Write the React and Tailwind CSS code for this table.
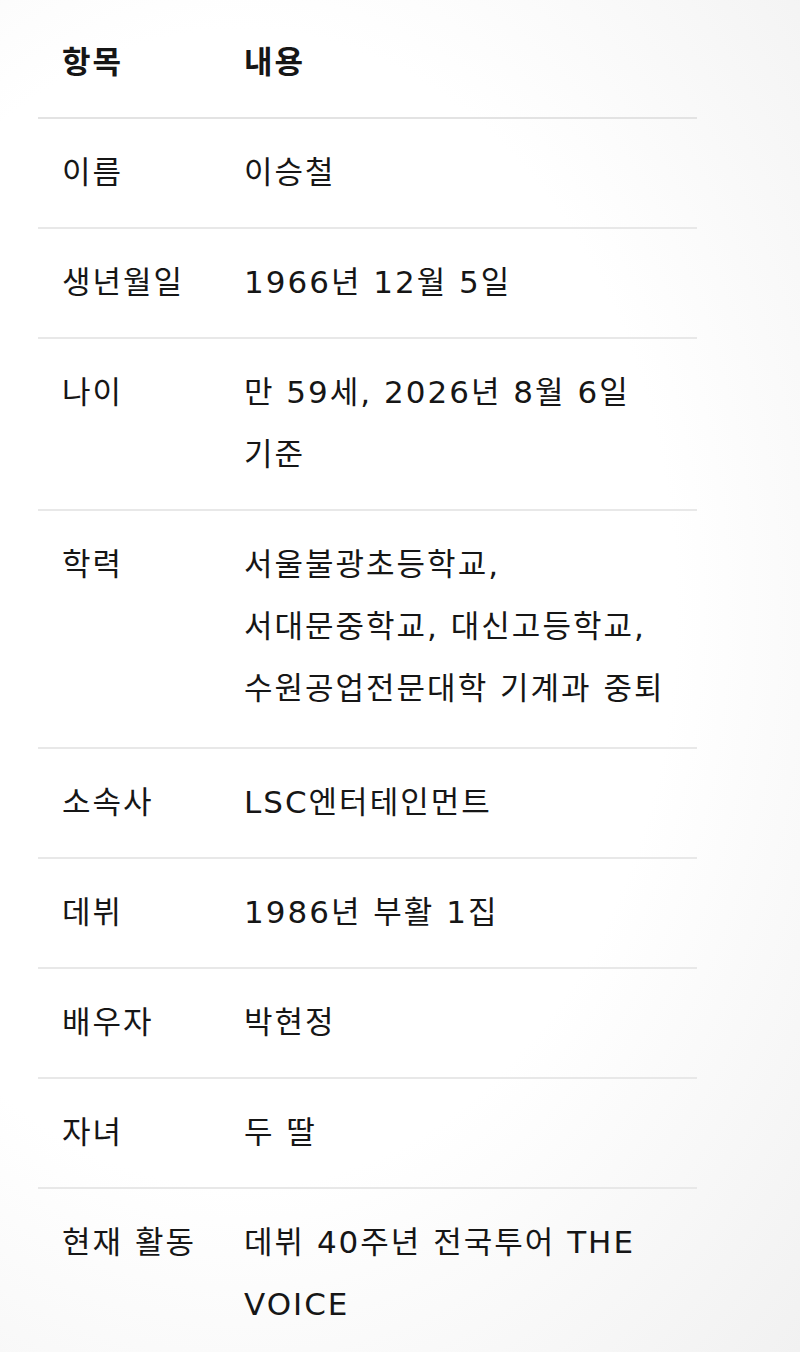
import React from "react";

const rows = [
  ["이름", ["이승철"]],
  ["생년월일", ["1966년 12월 5일"]],
  ["나이", ["만 59세, 2026년 8월 6일", "기준"]],
  ["학력", ["서울불광초등학교,", "서대문중학교, 대신고등학교,", "수원공업전문대학 기계과 중퇴"]],
  ["소속사", ["LSC엔터테인먼트"]],
  ["데뷔", ["1986년 부활 1집"]],
  ["배우자", ["박현정"]],
  ["자녀", ["두 딸"]],
  ["현재 활동", ["데뷔 40주년 전국투어 THE", "VOICE"]],
];

export default function App() {
  return (
    <div
      className="w-[800px] h-[1352px] overflow-hidden bg-white bg-[radial-gradient(ellipse_at_30%_45%,#ffffff_55%,#f1f1f1_100%)] pt-[7px] pl-[38px] text-[#161616]"
      style={{ fontFamily: '"DejaVu Sans", "Noto Sans CJK KR", sans-serif' }}
    >
      <table className="w-[659px] table-fixed border-collapse text-[31px] leading-[62px] tracking-[2px]">
        <colgroup>
          <col className="w-[182px]" />
          <col />
        </colgroup>
        <thead>
          <tr className="border-b-2 border-[#e3e3e3]">
            <th className="pl-[24px] pr-0 pt-[24px] pb-[24px] text-left align-top font-bold whitespace-nowrap">항목</th>
            <th className="pl-[24px] pr-[26px] pt-[24px] pb-[24px] text-left align-top font-bold">내용</th>
          </tr>
        </thead>
        <tbody>
          {rows.map(([k, v]) => (
            <tr key={k} className="border-b-2 border-[#e8e8e8]">
              <td className={`pl-[24px] pr-0 pt-[22px] align-top whitespace-nowrap ${v.length === 3 ? "pb-[28px]" : "pb-[24px]"}`}>{k}</td>
              <td className={`pl-[24px] pr-[26px] pt-[22px] align-top ${v.length === 3 ? "pb-[28px]" : "pb-[24px]"}`}>
                {v.map((line, i) => (
                  <div key={i} className="whitespace-nowrap">{line}</div>
                ))}
              </td>
            </tr>
          ))}
        </tbody>
      </table>
    </div>
  );
}
